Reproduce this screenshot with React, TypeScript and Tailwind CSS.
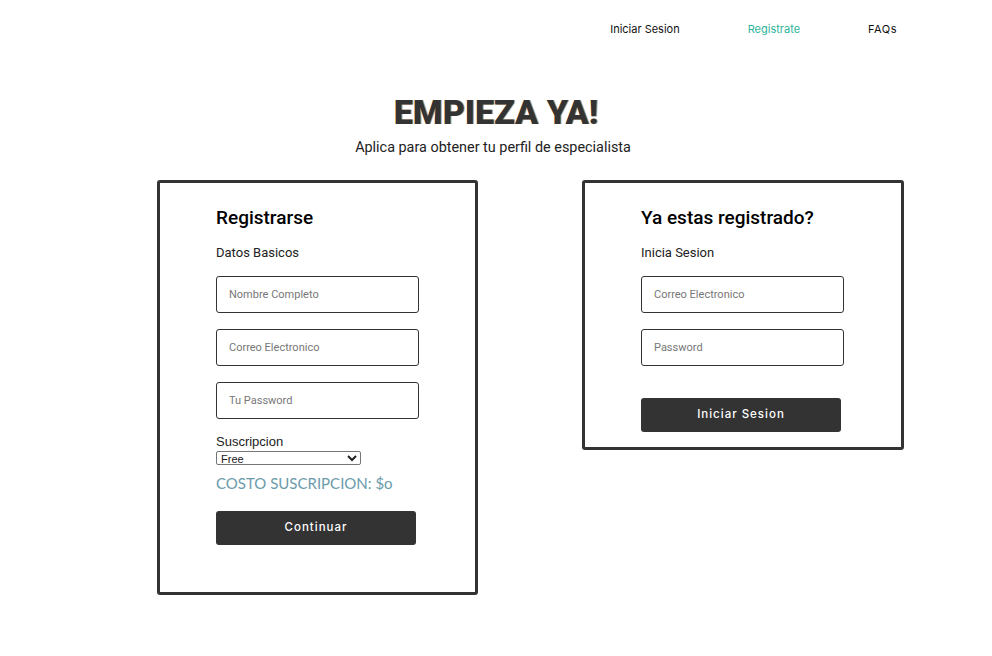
import React from 'react';

function Field({ placeholder, type = 'text' }: { placeholder: string; type?: string }) {
  return (
    <input
      type={type}
      placeholder={placeholder}
      className="block w-[203px] h-[37px] border border-[#333] rounded-[3px] pl-3 text-[11px] text-[#333] placeholder:text-[#777] outline-none"
    />
  );
}

function DarkButton({ children }: { children: React.ReactNode }) {
  return (
    <button className="block w-[200px] h-[34px] bg-[#333] rounded-[3px] text-white text-[11.5px] font-medium tracking-[1px] font-['Inter',sans-serif]">
      {children}
    </button>
  );
}

export default function App() {
  return (
    <div className="min-h-[656px] bg-white font-['Roboto',sans-serif] text-[#222]">
      <nav className="flex justify-end gap-[68px] pr-[95px] pt-[21px] h-[40px] text-[11px] font-normal font-['Inter',sans-serif]">
        <a className="text-[#111]">Iniciar Sesion</a>
        <a className="text-[#2fb59b]">Registrate</a>
        <a className="text-[#111] tracking-[0.5px]">FAQs</a>
      </nav>

      <header className="text-center mt-[51px]">
        <h1 className="text-[34px] leading-[42px] font-black text-[#333] font-['Roboto',sans-serif] [text-shadow:1px_0_0_#c9a36a]">
          EMPIEZA YA!
        </h1>
        <p className="mt-[6px] pr-[6px] text-[14.4px] leading-[18px] text-[#222]">
          Aplica para obtener tu perfil de especialista
        </p>
      </header>

      <div className="flex items-start gap-[104px] ml-[157px] mt-[23px]">
        <section className="w-[321px] border-[3px] border-[#333] rounded-[3px] pl-[56px] pt-[23px] pb-[47px]">
          <h2 className="text-[19px] leading-[24px] font-medium text-black">Registrarse</h2>
          <p className="mt-[15px] text-[13px] leading-[16px]">Datos Basicos</p>
          <div className="mt-[15px] flex flex-col gap-[16px]">
            <Field placeholder="Nombre Completo" />
            <Field placeholder="Correo Electronico" />
            <Field placeholder="Tu Password" type="password" />
          </div>
          <p className="mt-[15px] text-[13px] leading-[16px] font-['Liberation_Sans',sans-serif]">Suscripcion</p>
          <select className="mt-[1px] block w-[145px] h-[14px] text-[11px] leading-[12px] border border-[#767676] rounded-[2px] bg-white font-['Liberation_Sans',sans-serif]">
            <option>Free</option>
            <option>Premium</option>
          </select>
          <p className="mt-[8px] text-[15px] leading-[20px] font-normal text-[#6b9bab] font-['Lato',sans-serif]">
            COSTO SUSCRIPCION: $o
          </p>
          <div className="mt-[18px]">
            <DarkButton>Continuar</DarkButton>
          </div>
        </section>

        <section className="w-[322px] border-[3px] border-[#333] rounded-[3px] pl-[56px] pt-[23px] pb-[15px]">
          <h2 className="text-[19px] leading-[24px] font-medium text-black">Ya estas registrado?</h2>
          <p className="mt-[15px] text-[13px] leading-[16px]">Inicia Sesion</p>
          <div className="mt-[15px] flex flex-col gap-[16px]">
            <Field placeholder="Correo Electronico" />
            <Field placeholder="Password" type="password" />
          </div>
          <div className="mt-[32px]">
            <DarkButton>Iniciar Sesion</DarkButton>
          </div>
        </section>
      </div>
    </div>
  );
}
